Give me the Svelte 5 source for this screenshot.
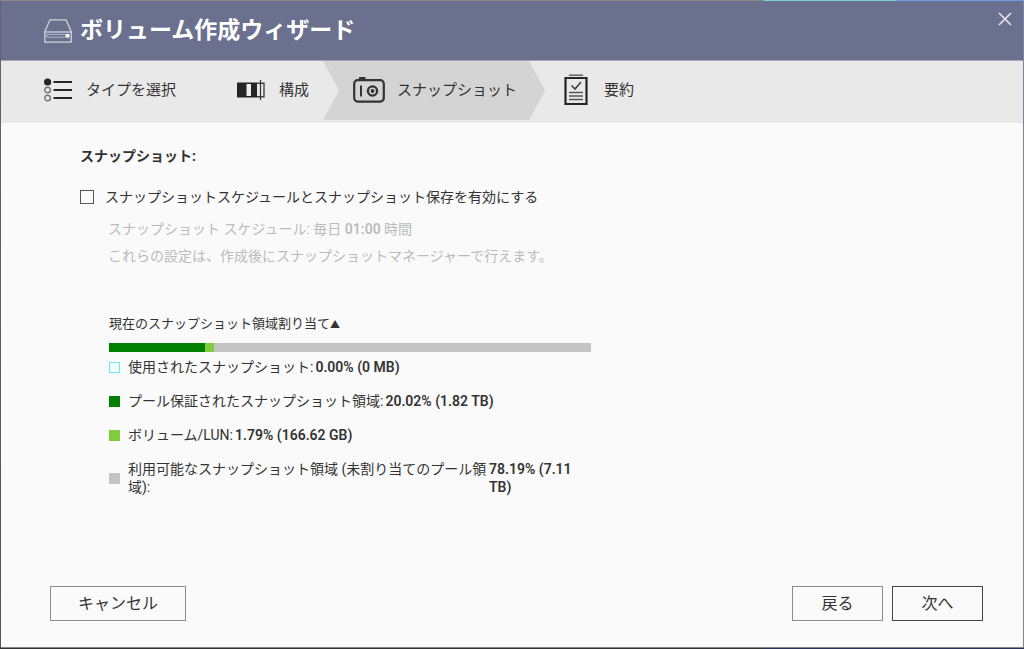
<script>
  const legend = [
    { kind: 'used', label: '使用されたスナップショット:', value: '0.00% (0 MB)' },
    { kind: 'pool', label: 'プール保証されたスナップショット領域:', value: '20.02% (1.82 TB)' },
    { kind: 'volume', label: 'ボリューム/LUN:', value: '1.79% (166.62 GB)' },
    { kind: 'free', label: '利用可能なスナップショット領域 (未割り当てのプール領域):', value: '78.19% (7.11 TB)' }
  ];

  const segments = [
    { kind: 'pool', percent: 20.02 },
    { kind: 'volume', percent: 1.79 }
  ];

  let enabled = $state(false);
</script>

<div class="frame">
  <main class="wizard">
    <header>
      <svg class="drive" width="28" height="24" viewBox="0 0 28 24" fill="none" stroke="#ccd6dc" stroke-width="1.3">
        <path d="M.8 12.5 6 .8h16l5.2 11.7v10.6H.8z" />
        <path d="M.8 13h26.4" />
        <path d="M2.5 15.4h19v2.8h-19z" stroke-width=".7" />
        <rect x="22" y="15" width="3.4" height="3.6" fill="#fff" stroke="none" />
      </svg>
      <h1>ボリューム作成ウィザード</h1>
      <button class="close" aria-label="閉じる">
        <svg width="14" height="14" viewBox="0 0 14 14" stroke="#e2e4ea" stroke-width="1.7">
          <path d="M1 1l12 12M13 1 1 13" />
        </svg>
      </button>
    </header>

    <ol class="steps">
      <li class="type">
        <svg width="28" height="24" viewBox="0 0 28 24">
          <g fill="none" stroke="#777" stroke-width="1.4">
            <circle cx="3.6" cy="12" r="2.8" />
            <circle cx="3.6" cy="20" r="2.8" />
          </g>
          <circle cx="3.6" cy="4" r="3.6" fill="#262626" />
          <path d="M9.5 4H28M9.5 12H28M9.5 20H28" stroke="#262626" stroke-width="2" />
        </svg>
        <span>タイプを選択</span>
      </li>
      <li class="config">
        <svg width="28" height="20" viewBox="0 0 28 20">
          <path d="M0 2.5h20v15H0z" fill="#262626" />
          <path d="M9.5 4h4.5v12H9.5z" fill="#eee" />
          <path d="M20 3.2h7v13.6h-7" fill="#e9e9e9" stroke="#444" stroke-width="1.4" />
          <path d="M23.5 0v20" stroke="#333" stroke-width="1.2" />
        </svg>
        <span>構成</span>
      </li>
      <li class="snapshot" aria-current="step">
        <svg width="32" height="26" viewBox="0 0 32 26" fill="none" stroke="#333">
          <rect x="1.2" y="3.2" width="29.6" height="21.4" rx="3.5" stroke-width="2.2" />
          <path d="M6 1.6h6.5" stroke-width="3" />
          <path d="M8 8.5v11" stroke-width="2" />
          <circle cx="19.5" cy="14" r="4.6" stroke-width="2.3" />
          <circle cx="19.5" cy="14" r="1.9" fill="#333" stroke="none" />
        </svg>
        <span>スナップショット</span>
      </li>
      <li class="summary">
        <svg width="24" height="32" viewBox="0 0 24 32" fill="none" stroke="#262626">
          <path d="M1.5 4h21v26h-21z" stroke-width="2.2" />
          <path d="M5 1.2h14" stroke-width="1.4" stroke="#555" />
          <path d="M7.5 11.5l3.5 3.5 6-7" stroke-width="1.7" stroke="#444" />
          <path d="M5 18.5h14M5 22h14M5 25.5h14" stroke-width="1.4" stroke="#555" />
        </svg>
        <span>要約</span>
      </li>
    </ol>

    <section class="content">
      <h2>スナップショット:</h2>

      <label class="enable">
        <input type="checkbox" bind:checked={enabled} />
        <span>スナップショットスケジュールとスナップショット保存を有効にする</span>
      </label>

      <div class="hints">
        <p>スナップショット スケジュール: 毎日 <b>01:00</b> 時間</p>
        <p>これらの設定は、作成後にスナップショットマネージャーで行えます。</p>
      </div>

      <div class="allocation">
        <h3>現在のスナップショット領域割り当て<span class="arrow">▲</span></h3>
        <div class="bar">
          {#each segments as segment}
            <div class={segment.kind} style="width:{segment.percent}%"></div>
          {/each}
        </div>
        <ul>
          {#each legend as item}
            <li>
              <i class={item.kind}></i>
              <span class="label">{item.label}</span>
              <b>{item.value}</b>
            </li>
          {/each}
        </ul>
      </div>
    </section>

    <footer>
      <button class="cancel">キャンセル</button>
      <button>戻る</button>
      <button class="next">次へ</button>
    </footer>
  </main>
</div>

<style>
  :global(body) {
    margin: 0;
    background: #3c3f4c;
    color: #333;
    font-family: Roboto, 'Noto Sans CJK JP', sans-serif;
    font-size: 14px;
    line-height: 18px;
  }

  * {
    box-sizing: border-box;
  }

  /* slivers of the desktop behind the window */
  .frame {
    min-height: 100vh;
    padding: 1px;
    display: flex;
    background:
      linear-gradient(to right, #8a8a86 74.6%, #7fd0cf 74.6% 87.5%, #6d9bdc 87.5%) top / 100% 1px no-repeat,
      linear-gradient(to right, #333 74.6%, #2b3154 74.6%) bottom / 100% 1px no-repeat,
      linear-gradient(#666, #555) left / 1px 100% no-repeat,
      #7d84a0;
  }

  .wizard {
    flex: 1;
    display: flex;
    flex-direction: column;
    background: #fafafa;
    border-bottom: 1px solid #888;
  }

  h1, h2, h3, p, ul, ol {
    margin: 0;
    padding: 0;
  }

  header {
    display: flex;
    align-items: center;
    gap: 8px;
    height: 60px;
    padding: 0 11px 0 43px;
    background: #6a708d;
    border-bottom: 1px solid #a3a7b8;
    color: #fff;
  }
  h1 {
    flex: 1;
    font-size: 23px;
    line-height: 32px;
    font-weight: 700;
  }

  .close {
    align-self: flex-start;
    display: flex;
    margin-top: 11px;
    padding: 0;
    border: 0;
    background: none;
    cursor: pointer;
  }

  .steps {
    display: flex;
    height: 62px;
    padding-bottom: 3px;
    background: #e9e9e9;
    list-style: none;
    font-size: 15px;
  }
  .steps li {
    display: flex;
    align-items: center;
    gap: 14px;
    padding-bottom: 2px;
  }
  .steps .type {
    padding-left: 43px;
    padding-right: 30px;
  }
  .steps .config {
    padding-left: 31px;
    padding-right: 14px;
  }
  .steps .snapshot {
    gap: 12px;
    padding-left: 30px;
    padding-right: 28px;
    background: #d4d4d4;
    clip-path: polygon(0 0, calc(100% - 16px) 0, 100% 50%, calc(100% - 16px) 100%, 0 100%, 16px 50%);
  }
  .steps .summary {
    gap: 16px;
    padding-left: 19px;
  }

  .content {
    flex: 1;
    padding: 24px 79px;
  }
  h2 {
    font-size: 14px;
    font-weight: 700;
  }

  .enable {
    display: flex;
    align-items: center;
    gap: 11px;
    margin-top: 23px;
  }
  input {
    appearance: none;
    width: 14px;
    height: 14px;
    margin: 0;
    border: 1px solid #555;
    background: #fafafa;
  }
  input:checked {
    background: #555;
    box-shadow: inset 0 0 0 2px #fafafa;
  }

  .hints {
    display: grid;
    gap: 9px;
    padding-left: 28px;
    margin-top: 14px;
    color: #bbb;
  }

  .allocation {
    max-width: 511px;
    padding-left: 29px;
    margin-top: 50px;
  }
  h3 {
    font-size: 13px;
    font-weight: 400;
  }
  .arrow {
    font-size: 10px;
  }
  .bar {
    display: flex;
    height: 9px;
    margin-top: 9px;
    background: #c4c4c4;
  }
  .pool {
    background: #008000;
  }
  .volume {
    background: #80cc3c;
  }
  .free {
    background: #c4c4c4;
  }
  .used {
    border: 1px solid #6ee8f8;
    background: #f2feff;
  }

  ul {
    display: grid;
    gap: 16px;
    margin-top: 6px;
    list-style: none;
  }
  ul li {
    display: flex;
    align-items: center;
  }
  i {
    flex: none;
    width: 11px;
    height: 11px;
    margin-right: 8px;
  }
  .label {
    max-width: 359px;
    margin-right: 2px;
  }
  ul b {
    max-width: 90px;
    min-width: max-content;
  }
  ul li:last-child b {
    min-width: 0;
  }

  b {
    font-weight: 600;
  }

  footer {
    display: flex;
    gap: 9px;
    padding: 0 40px 26px 49px;
  }
  footer button {
    min-width: 91px;
    height: 35px;
    padding: 0 27px;
    border: 1px solid #8c8c8c;
    background: #fafafa;
    color: #333;
    font: inherit;
    font-size: 16px;
    cursor: pointer;
  }
  .cancel {
    margin-right: auto;
  }
  footer .next {
    border-color: #444;
  }
</style>
